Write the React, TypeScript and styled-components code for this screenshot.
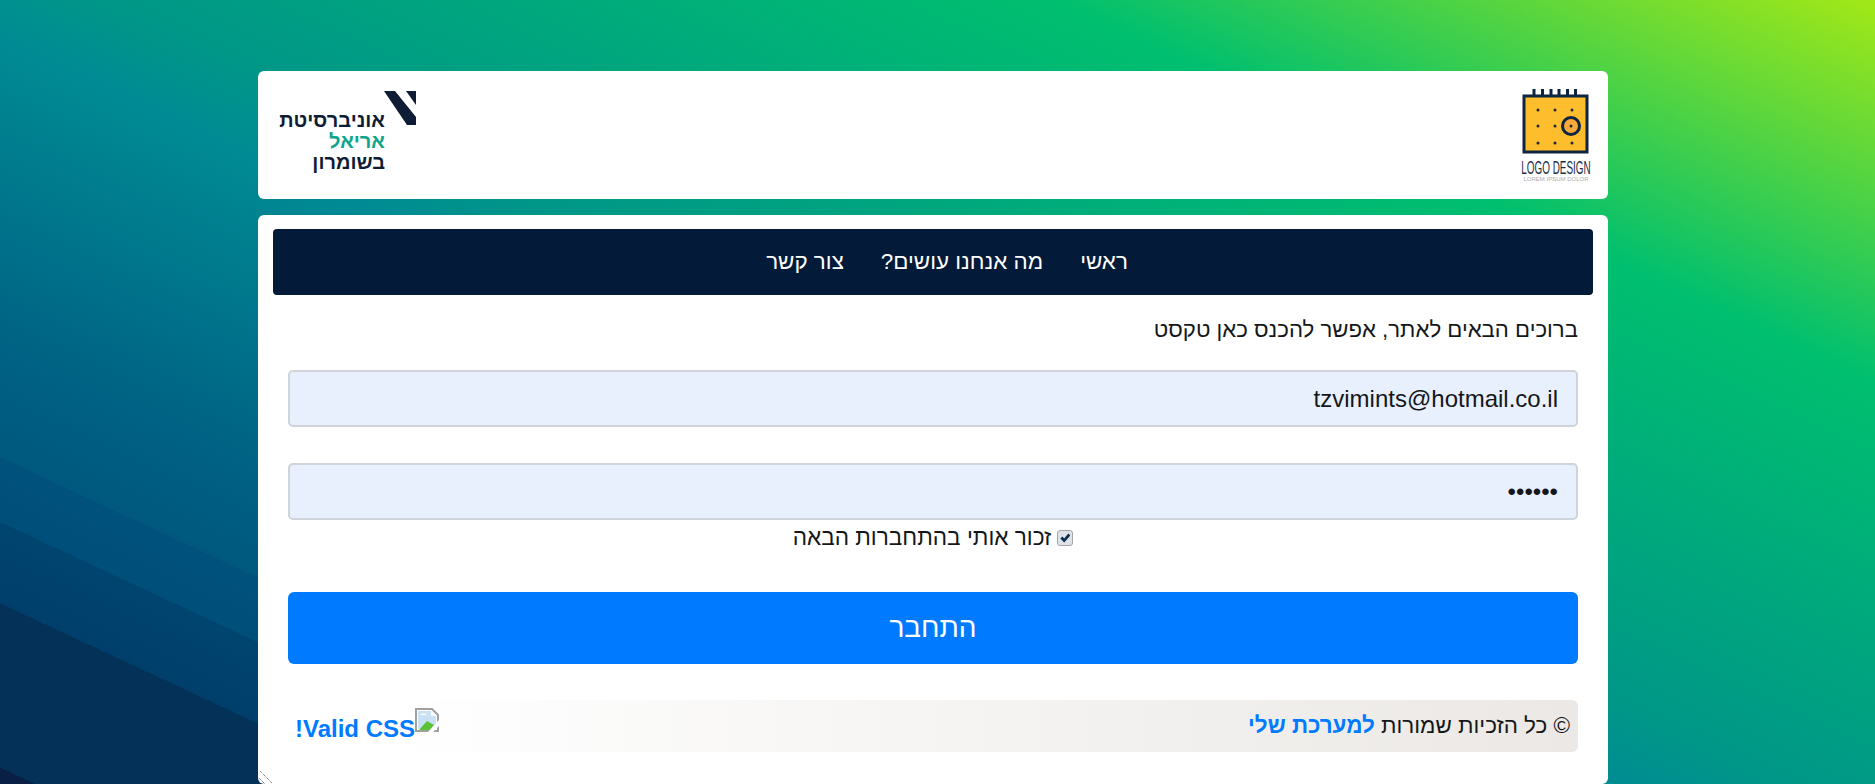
import styled, { createGlobalStyle } from 'styled-components'

const GlobalStyle = createGlobalStyle`
	html, body {
		margin: 0;
		height: 784px;
		overflow: hidden;
	}
	body {
		font-family: 'Liberation Sans', Arial, sans-serif;
		color: #14171a;
	}
`

const App = () => {
	return (
		<Page dir='rtl'>
			<GlobalStyle />
			<Header>
				<DesignLogo>
					<svg width='68' height='65' viewBox='0 0 68 65'>
						<path d='M12 0v12M20.500 0v12M29 0v12M37 0v12M45.500 0v12M53.500 0v12' stroke='#0f2440' strokeWidth='3' />
						<rect x='2' y='7' width='63' height='56' fill='#fdbd2c' stroke='#0f2440' strokeWidth='3' />
						{[21, 37, 54].map(y =>
							[16, 33, 50].map(x => <circle key={`${x}-${y}`} cx={x} cy={y} r='1.500' fill='#1b2636' />)
						)}
						<circle cx='49' cy='37' r='8.500' fill='#f9a83a' stroke='#0f2440' strokeWidth='3' />
						<circle cx='49' cy='37' r='1.500' fill='#1b2636' />
					</svg>
					<LogoTitle dir='ltr'>LOGO DESIGN</LogoTitle>
					<LogoCaption dir='ltr'>LOREM IPSUM DOLOR</LogoCaption>
				</DesignLogo>
				<ArielLogo>
					<ArielMark viewBox='0 0 32 34'>
						<path d='M0 0h11l21 26v8h-9z' fill='#0f1c36' />
						<path d='M22 0h10v14z' fill='#0f1c36' />
					</ArielMark>
					<ArielLine>אוניברסיטת</ArielLine>
					<ArielLine $accent>אריאל</ArielLine>
					<ArielLine>בשומרון</ArielLine>
				</ArielLogo>
			</Header>
			<Main>
				<Nav>
					<NavLink>ראשי</NavLink>
					<NavLink>מה אנחנו עושים?</NavLink>
					<NavLink>צור קשר</NavLink>
				</Nav>
				<Welcome>ברוכים הבאים לאתר, אפשר להכנס כאן טקסט</Welcome>
				<Form>
					<Field type='text' dir='ltr' defaultValue='tzvimints@hotmail.co.il' />
					<Field type='password' dir='ltr' defaultValue='123456' />
					<Remember>
						<RememberBox type='checkbox' defaultChecked />
						זכור אותי בהתחברות הבאה
					</Remember>
					<Submit type='button'>התחבר</Submit>
				</Form>
				<Footer>
					<span>
						© כל הזכיות שמורות <FooterLink>למערכת שלי</FooterLink>
					</span>
					<ValidLink>
						<BrokenImage viewBox='0 0 24 24'>
							<path d='M1 1h16l6 6v16H1z' fill='#fff' stroke='#a0a0a0' strokeWidth='2' />
							<path d='M3 3h13v5h5v9L3 21z' fill='#c9e0f5' />
							<path d='M5 7c1-2 6-2 7 0z' fill='#fff' />
							<path d='M4 22l8-9 7 4-4 5z' fill='#5bc236' />
							<path d='M24 12L13 24h5l6-6z' fill='#fff' />
						</BrokenImage>
						Valid CSS!
					</ValidLink>
				</Footer>
				<ResizeGrip viewBox='0 0 14 14'>
					<path d='M2 1l12 12M1 8l6 6' stroke='#555' strokeWidth='1' strokeDasharray='1 1' />
					<path d='M3 1l11 11M2 8l5 5' stroke='#fff' strokeWidth='1' />
				</ResizeGrip>
			</Main>
		</Page>
	)
}

export default App

const Page = styled.div`
	box-sizing: border-box;
	height: 784px;
	padding: 71px 267px 0 258px;
	display: flex;
	flex-direction: column;
	gap: 16px;
	background: linear-gradient(
		25deg,
		#0a1f45 0,
		#0a1f45 1%,
		#033157 1%,
		#033157 10.9%,
		#003f6b 10.9%,
		#004570 15.8%,
		#004e7a 15.8%,
		#00527c 19.7%,
		#00587f 19.7%,
		#006284 26.4%,
		#008b94 45%,
		#009688 50%,
		#00bf6f 77%,
		#a3e816 100%
	);
`

const Header = styled.header`
	flex: none;
	height: 128px;
	box-sizing: border-box;
	padding: 18px 18px 0;
	display: flex;
	justify-content: space-between;
	align-items: flex-start;
	background: #fff;
	border-radius: 6px;
`

const DesignLogo = styled.div`
	width: 68px;
	display: flex;
	flex-direction: column;
	align-items: center;
`

const LogoTitle = styled.div`
	font-size: 18px;
	line-height: 15px;
	color: #1c2c42;
	white-space: nowrap;
	transform: scaleX(0.55);
	margin-top: 7px;
`

const LogoCaption = styled.div`
	font-size: 6px;
	line-height: 7px;
	color: #a9adb3;
	white-space: nowrap;
`

const ArielLogo = styled.div`
	width: 140px;
	margin-top: 2px;
	display: flex;
	flex-direction: column;
	align-items: flex-start;
`

const ArielMark = styled.svg`
	width: 32px;
	height: 34px;
	margin-bottom: -15px;
`

const ArielLine = styled.div<{ $accent?: boolean }>`
	font-size: 20px;
	line-height: 21px;
	font-weight: 700;
	margin-right: 31px;
	color: ${({ $accent }) => ($accent ? '#0fa58c' : '#0f1c36')};
`

const Main = styled.main`
	position: relative;
	flex: 1;
	box-sizing: border-box;
	padding: 14px 15px 0;
	background: #fff;
	border-radius: 6px;
	overflow: hidden;
`

const ResizeGrip = styled.svg`
	position: absolute;
	left: 0;
	bottom: 0;
	width: 14px;
	height: 14px;
`

const Nav = styled.nav`
	height: 66px;
	box-sizing: border-box;
	padding-left: 28px;
	display: flex;
	justify-content: center;
	align-items: center;
	gap: 37px;
	background: #031a38;
	border-radius: 4px;
`

const NavLink = styled.a`
	color: #fff;
	font-size: 22.4px;
	cursor: pointer;
`

const Welcome = styled.p`
	margin: 20px 15px 0;
	font-size: 22.2px;
	line-height: 30px;
`

const Form = styled.form`
	margin: 25px 15px 0;
	display: flex;
	flex-direction: column;
`

const Field = styled.input`
	box-sizing: border-box;
	height: 57px;
	margin-bottom: 36px;
	padding: 0 18px;
	background: #e8f0fe;
	border: 2px solid #ced4da;
	border-radius: 5px;
	font-family: inherit;
	font-size: 24px;
	color: #14171a;
	text-align: right;
	outline: none;
`

const Remember = styled.label`
	margin-top: -34px;
	height: 32px;
	display: flex;
	justify-content: center;
	align-items: center;
	gap: 6px;
	font-size: 22.6px;
`

const RememberBox = styled.input`
	appearance: none;
	position: relative;
	box-sizing: border-box;
	width: 16px;
	height: 16px;
	margin: 0;
	background: #dfe3e8;
	border: 1px solid #a3a7ab;
	border-radius: 3px;

	&::after {
		content: '';
		position: absolute;
		left: 2px;
		top: 2px;
		width: 10px;
		height: 10px;
		background: #0c2f4f;
		clip-path: polygon(0 55%, 20% 35%, 38% 55%, 80% 5%, 100% 25%, 38% 95%);
	}
`

const Submit = styled.button`
	margin-top: 38px;
	height: 72px;
	background: #007bff;
	border: none;
	border-radius: 6px;
	color: #fff;
	font-family: inherit;
	font-size: 28px;
	cursor: pointer;
`

const Footer = styled.footer`
	margin: 36px 15px 0;
	height: 52px;
	box-sizing: border-box;
	padding: 0 8px 0 7px;
	display: flex;
	justify-content: space-between;
	align-items: center;
	font-size: 22.4px;
	background: linear-gradient(to left, #ebe8e5, #fff 92%);
	border-radius: 6px;
`

const FooterLink = styled.a`
	color: #007bff;
	font-weight: 700;
	cursor: pointer;
`

const ValidLink = styled.a`
	display: flex;
	align-items: flex-start;
	padding-top: 6px;
	font-size: 24px;
	color: #007bff;
	font-weight: 700;
	cursor: pointer;
`

const BrokenImage = styled.svg`
	width: 24px;
	height: 24px;
	margin-top: -7px;
`
